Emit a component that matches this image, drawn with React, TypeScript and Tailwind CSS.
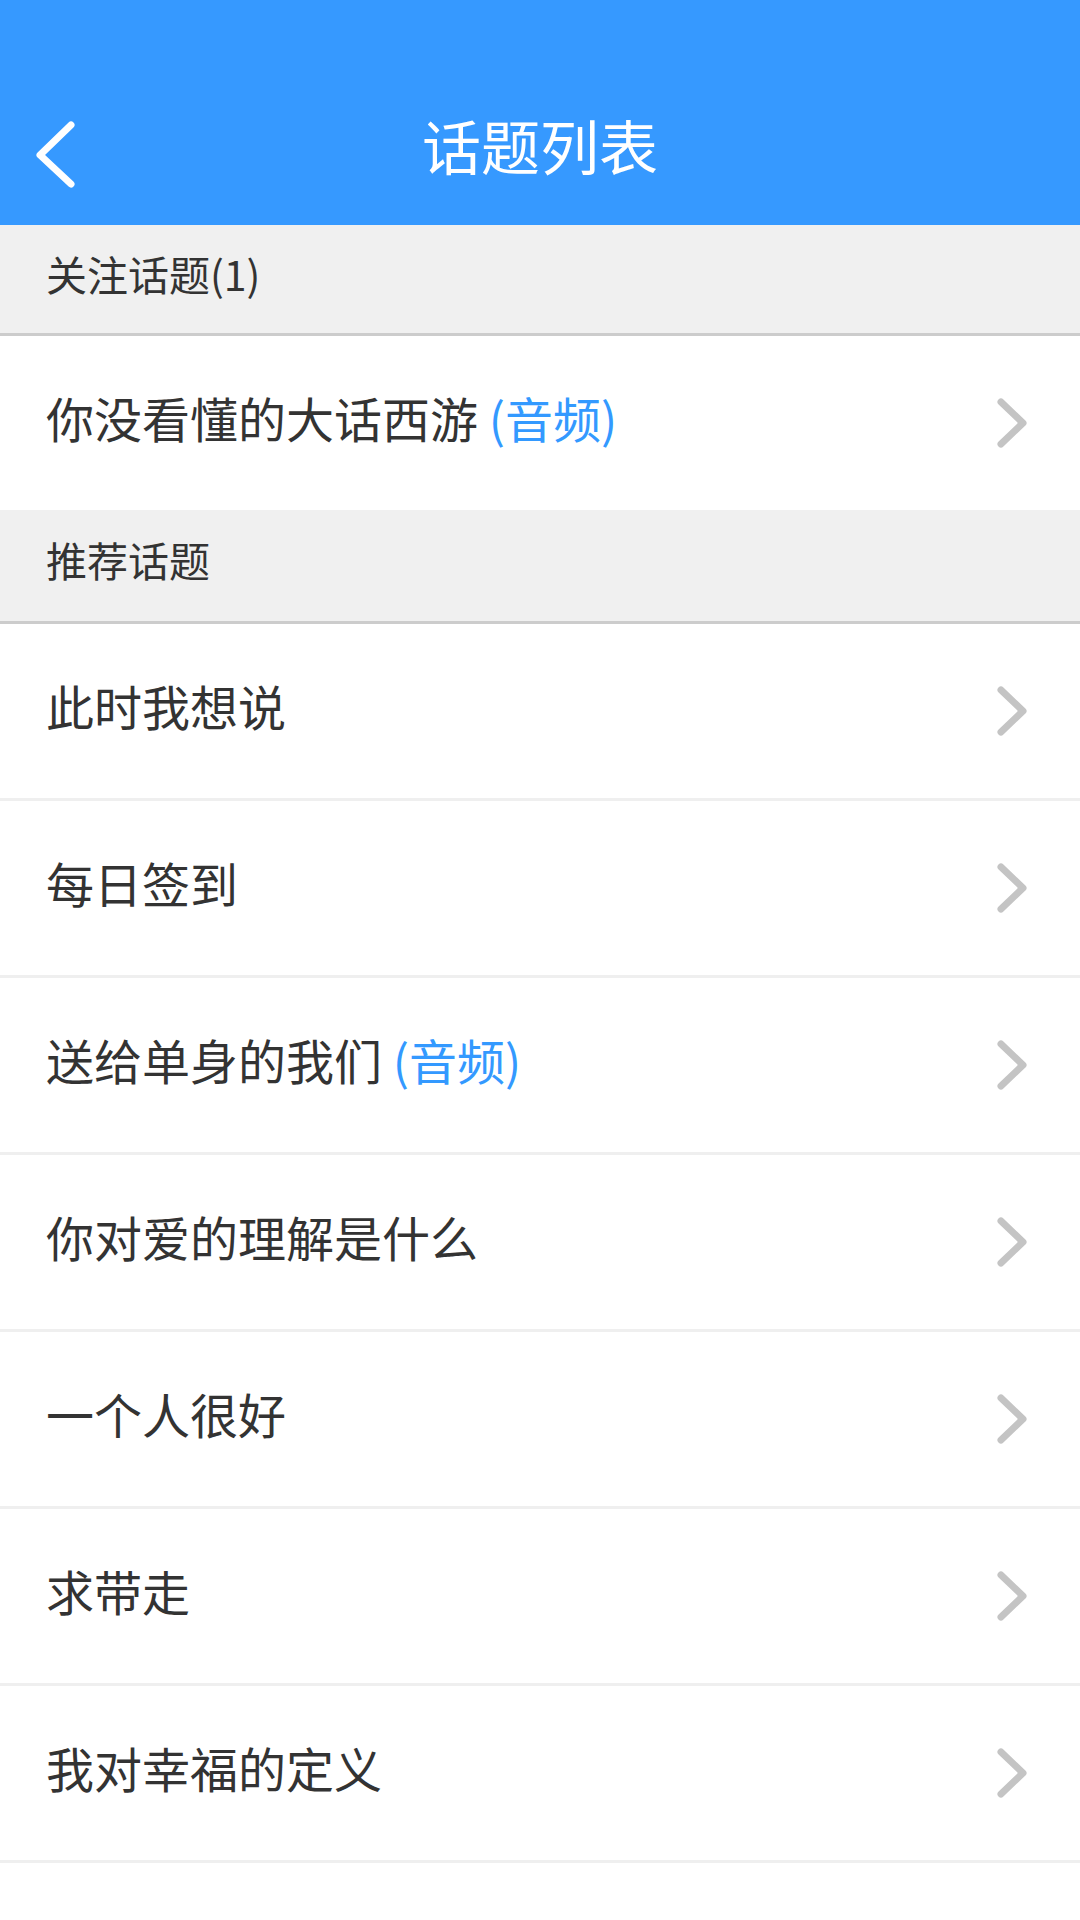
import React from "react";

const Chevron = () => (
  <svg width="40" height="60" viewBox="0 0 40 60" className="shrink-0">
    <polyline points="9,9 31,30 9,51" fill="none" stroke="#c4c4c4" strokeWidth="7" strokeLinecap="round" strokeLinejoin="round" />
  </svg>
);

type Item = { title: string; audio?: boolean };

const Row = ({ item }: { item: Item }) => (
  <div className="flex h-[177px] items-center justify-between border-b-[3px] border-[#efefef] bg-white pl-[46px] pr-[48px]">
    <span className="pb-[12px] text-[48px] leading-none text-[#333333]">
      {item.title}
      {item.audio && <span className="text-[#3399ff]"> (音频)</span>}
    </span>
    <Chevron />
  </div>
);

const Section = ({ title, h }: { title: string; h: string }) => (
  <div className={`flex ${h} items-center border-b-[3px] border-[#cccccc] bg-[#f0f0f0] pl-[46px]`}>
    <span className="pb-[12px] text-[41px] leading-none text-[#333333]">{title}</span>
  </div>
);

export default function App() {
  const items: Item[] = [
    { title: "此时我想说" },
    { title: "每日签到" },
    { title: "送给单身的我们", audio: true },
    { title: "你对爱的理解是什么" },
    { title: "一个人很好" },
    { title: "求带走" },
    { title: "我对幸福的定义" },
  ];
  return (
    <div
      className="flex min-h-[1920px] w-[1080px] flex-col bg-white"
      style={{ fontFamily: '"Noto Sans CJK SC", "Noto Sans", sans-serif' }}
    >
      <div className="flex h-[225px] items-end bg-[#3699ff] pb-[2px]">
        <div className="relative flex h-[150px] w-full items-center justify-center">
          <svg width="50" height="70" viewBox="0 0 50 70" className="absolute left-[30px] top-[47px]">
            <polyline points="41,5 10,35 41,64" fill="none" stroke="#ffffff" strokeWidth="7" strokeLinecap="round" strokeLinejoin="round" />
          </svg>
          <span className="pb-[8px] text-[59px] leading-none text-white">话题列表</span>
        </div>
      </div>
      <Section title="关注话题(1)" h="h-[111px]" />
      <div className="flex h-[174px] items-center justify-between bg-white pl-[46px] pr-[48px]">
        <span className="pb-[12px] text-[48px] leading-none text-[#333333]">
          你没看懂的大话西游<span className="text-[#3399ff]"> (音频)</span>
        </span>
        <Chevron />
      </div>
      <Section title="推荐话题" h="h-[114px]" />
      {items.map((it, i) => (
        <Row key={i} item={it} />
      ))}
    </div>
  );
}
